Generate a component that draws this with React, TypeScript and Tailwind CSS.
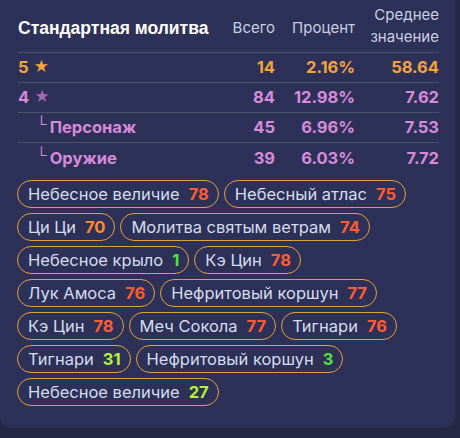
import React from 'react';

const rows = [
  { label: '5', star: true, total: 14, pct: '2.16%', avg: '58.64', color: 'text-[#f7a33c]', starColor: 'text-[#f7a33c]', sub: false },
  { label: '4', star: true, total: 84, pct: '12.98%', avg: '7.62', color: 'text-[#d68bd8]', starColor: 'text-[#a56cae]', sub: false },
  { label: 'Персонаж', star: false, total: 45, pct: '6.96%', avg: '7.53', color: 'text-[#d68bd8]', starColor: '', sub: true },
  { label: 'Оружие', star: false, total: 39, pct: '6.03%', avg: '7.72', color: 'text-[#d68bd8]', starColor: '', sub: true },
];

const RED = 'text-[#ff5c33]';
const ORANGE = 'text-[#ff8a2e]';
const GREEN = 'text-[#4de83a]';
const LIME = 'text-[#b8f03a]';

const pulls = [
  { name: 'Небесное величие', n: 78, c: RED },
  { name: 'Небесный атлас', n: 75, c: RED },
  { name: 'Ци Ци', n: 70, c: ORANGE },
  { name: 'Молитва святым ветрам', n: 74, c: RED },
  { name: 'Небесное крыло', n: 1, c: GREEN },
  { name: 'Кэ Цин', n: 78, c: RED },
  { name: 'Лук Амоса', n: 76, c: RED },
  { name: 'Нефритовый коршун', n: 77, c: RED },
  { name: 'Кэ Цин', n: 78, c: RED },
  { name: 'Меч Сокола', n: 77, c: RED },
  { name: 'Тигнари', n: 76, c: RED },
  { name: 'Тигнари', n: 31, c: LIME },
  { name: 'Нефритовый коршун', n: 3, c: GREEN },
  { name: 'Небесное величие', n: 27, c: LIME },
];

export default function App() {
  return (
    <main className="w-[460px] h-[438px] bg-[#252845] overflow-hidden">
      <div className="w-[455px] h-[428px] bg-[#2d3157] rounded-b-xl px-[18px] flex flex-col">
        {/* Table */}
        <div className="w-[421px] flex flex-col">
          <div className="h-[53px] flex items-center border-b border-[#4b5070]">
            <div className="flex-1 text-white text-[17.5px] font-bold font-['Liberation_Sans'] pt-[4px]">Стандартная молитва</div>
            <div className="w-[60px] text-right text-[15px] text-[#c7cfe3] font-['Inter'] pt-[4px]">Всего</div>
            <div className="w-[80px] text-right text-[15px] text-[#c7cfe3] font-['Inter'] pt-[4px]">Процент</div>
            <div className="w-[84px] text-right text-[15px] leading-[22px] text-[#c7cfe3] font-['Inter'] pb-[1px]">
              Среднее<br />значение
            </div>
          </div>
          {rows.map((r, i) => (
            <div
              key={r.label}
              className={`h-[30px] flex items-center font-bold ${r.color} ${i < rows.length - 1 ? 'border-b border-[#4b5070]' : ''}`}
            >
              <div className="flex-1 flex items-center font-['Inter'] text-[16.5px]">
                {r.sub && <span className="ml-[18px] mr-[3px] font-normal text-[15px] -mt-[6px]">└</span>}
                <span>{r.label}</span>
                {r.star && <span className={`ml-[5px] text-[15px] ${r.starColor}`}>★</span>}
              </div>
              <div className="w-[60px] text-right text-[16.5px] font-['Inter']">{r.total}</div>
              <div className="w-[80px] text-right text-[16.5px] font-['Inter']">{r.pct}</div>
              <div className="w-[84px] text-right text-[16.5px] font-['Inter']">{r.avg}</div>
            </div>
          ))}
        </div>

        {/* Pull history */}
        <div className="mt-[7px] -ml-[1px] w-[420px] flex flex-wrap gap-x-[5px] gap-y-[5px]">
          {pulls.map((p, i) => (
            <div
              key={i}
              className="h-[28px] pl-[10px] pr-[9px] flex items-center gap-[9px] rounded-full border border-[#e59f3a] font-['Inter'] text-[16.5px]"
            >
              <span className="text-[#d5dcef]">{p.name}</span>
              <span className={`font-bold ${p.c}`}>{p.n}</span>
            </div>
          ))}
        </div>
      </div>
    </main>
  );
}
